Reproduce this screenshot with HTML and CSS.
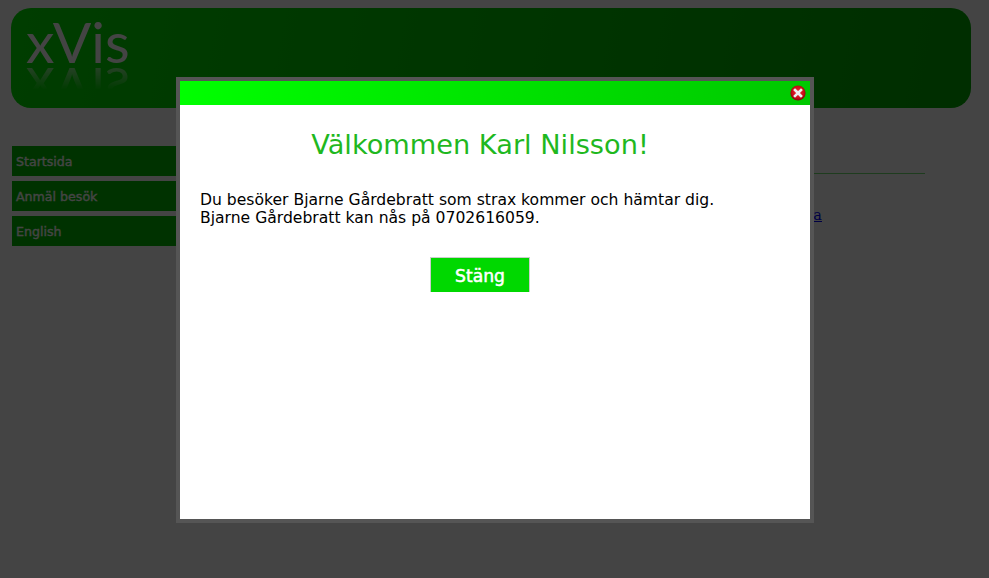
FILE: index.html
```html
<!DOCTYPE html>
<html lang="sv">
<head>
<meta charset="utf-8">
<title>xVis</title>
<link rel="stylesheet" href="styles.css">
</head>
<body>
<div class="page">
  <header class="banner">
    <div class="logo">xVis</div>
  </header>
  <div class="main">
    <nav class="nav">
      <a class="nav-item" href="#">Startsida</a>
      <a class="nav-item" href="#">Anmäl besök</a>
      <a class="nav-item" href="#">English</a>
    </nav>
    <section class="content">
      <hr class="rule">
      <p class="link-row"><a href="#">Startsida</a></p>
    </section>
  </div>
</div>
<div class="overlay"></div>
<div class="modal">
  <div class="modal-bar">
    <svg class="close" width="16" height="16" viewBox="0 0 16 16" aria-label="Stäng">
      <defs>
        <radialGradient id="red" cx="50%" cy="45%" r="55%">
          <stop offset="0" stop-color="#f4303a"/>
          <stop offset="0.7" stop-color="#c80d16"/>
          <stop offset="1" stop-color="#7c0508"/>
        </radialGradient>
      </defs>
      <circle cx="8" cy="8" r="7.6" fill="url(#red)"/>
      <path d="M5 5 L11 11 M11 5 L5 11" stroke="#eee" stroke-width="2.6" stroke-linecap="square"/>
    </svg>
  </div>
  <div class="modal-body">
    <h1 class="modal-title">Välkommen Karl Nilsson!</h1>
    <p class="modal-text">Du besöker Bjarne Gårdebratt som strax kommer och hämtar dig.<br>Bjarne Gårdebratt kan nås på 0702616059.</p>
    <div class="modal-actions"><button class="modal-button" type="button">Stäng</button></div>
  </div>
</div>
</body>
</html>
```
FILE: styles.css
```css
html, body {
  margin: 0;
  height: 100%;
  background: #fff;
  overflow: hidden;
}
.page {
  padding: 8px 18px 0 11px;
  font-family: "Liberation Serif", serif;
}
.banner {
  height: 100px;
  border-radius: 20px;
  background: linear-gradient(100deg, #00e400 0%, #00d000 35%, #00ab00 100%);
  padding: 5px 0 0 15px;
  box-sizing: border-box;
}
.logo {
  width: 110px;
  font-family: Lato, sans-serif;
  font-weight: 400;
  font-size: 57px;
  line-height: 56px;
  color: #fff;
  -webkit-box-reflect: below -7px linear-gradient(transparent 50%, rgba(0,0,0,.55) 90%);
}
.main {
  display: flex;
  margin-top: 38px;
}
.nav {
  width: 190px;
  margin-left: 1px;
  display: flex;
  flex-direction: column;
  gap: 5px;
}
.nav-item {
  height: 30px;
  padding-left: 4px;
  padding-top: 1px;
  box-sizing: border-box;
  background: #00bd00;
  color: #fff;
  font: 12.6px/30px "DejaVu Sans", sans-serif;
  -webkit-text-stroke: .35px #fff;
  text-decoration: none;
}
.content {
  flex: 1;
  padding-top: 27px;
  margin-right: 46px;
}
.rule {
  margin: 0;
  border: 0;
  border-top: 1px solid #70e070;
}
.link-row {
  margin: 32px 103px 0 0;
  text-align: right;
  font-family: "DejaVu Serif", serif;
  font-size: 14.5px;
  line-height: 18px;
}
.link-row a {
  color: #0000ff;
}
.overlay {
  position: fixed;
  inset: 0;
  background: rgba(0, 0, 0, .733);
}
.modal {
  position: absolute;
  left: 176px;
  top: 77px;
  width: 630px;
  height: 438px;
  border: 4px solid #555;
  background: #fff;
  font-family: "DejaVu Sans", sans-serif;
}
.modal-bar {
  height: 24px;
  background: linear-gradient(100deg, #00ff00 0%, #00c800 100%);
  display: flex;
  justify-content: flex-end;
  align-items: center;
  padding-right: 4px;
}
.modal-body {
  padding: 0 50px 0 20px;
}
.modal-title {
  margin: 23px 0 0;
  text-align: center;
  font-size: 27.2px;
  line-height: 34px;
  font-weight: normal;
  white-space: nowrap;
  color: #1fb81f;
}
.modal-text {
  margin: 29px 0 0;
  font-size: 15.6px;
  line-height: 18px;
  white-space: nowrap;
  color: #000;
}
.modal-actions {
  margin-top: 30px;
  display: flex;
  justify-content: center;
}
.modal-button {
  width: 100px;
  height: 35px;
  padding: 1px 0 0;
  box-sizing: border-box;
  border: solid #ccc;
  border-width: 1px 1px 0 1px;
  background: #00d800;
  color: #fff;
  font: 17.2px "DejaVu Sans", sans-serif;
  -webkit-text-stroke: .5px #fff;
}
```
